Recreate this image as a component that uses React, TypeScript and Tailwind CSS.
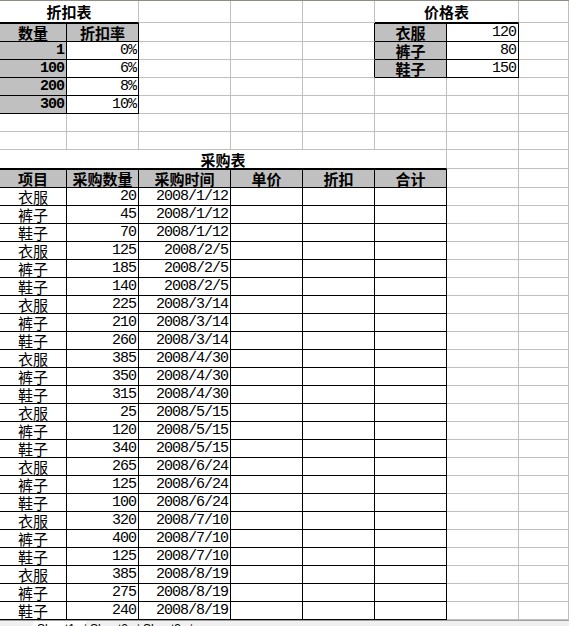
import type { ReactNode } from "react";

const CN = "font-['Noto_Sans_CJK_SC',sans-serif]";
const NUM = "font-['Liberation_Mono',monospace] tracking-[-1px]";

type Edge = "g" | "k";

interface CellProps {
  w: string;
  rb?: Edge;
  bb?: Edge;
  head?: boolean;
  top?: boolean;
  align?: "l" | "c" | "r";
  className?: string;
  children?: ReactNode;
}

function Cell({
  w,
  rb = "g",
  bb = "g",
  head = false,
  top = false,
  align = "c",
  className = "",
  children,
}: CellProps) {
  const r = rb === "k" ? "border-r-black" : "border-r-[#c0c0c0]";
  const b = bb === "k" ? "border-b-black" : "border-b-[#c0c0c0]";
  const j =
    align === "r" ? "justify-end pr-[2px]" : align === "l" ? "justify-start pl-[2px]" : "justify-center";
  return (
    <div
      className={`flex h-full shrink-0 items-center whitespace-nowrap border-r border-b leading-[15px] ${w} ${r} ${b} ${j} ${
        head ? "bg-[#c0c0c0] font-bold" : ""
      } ${top ? "shadow-[inset_0_1px_0_#000]" : ""} ${className}`}
    >
      {children}
    </div>
  );
}

const discounts = [
  ["1", "0%"],
  ["100", "6%"],
  ["200", "8%"],
  ["300", "10%"],
];

const prices = [
  ["衣服", "120"],
  ["裤子", "80"],
  ["鞋子", "150"],
];

const purchases: [string, number, string][] = [
  ["衣服", 20, "2008/1/12"],
  ["裤子", 45, "2008/1/12"],
  ["鞋子", 70, "2008/1/12"],
  ["衣服", 125, "2008/2/5"],
  ["裤子", 185, "2008/2/5"],
  ["鞋子", 140, "2008/2/5"],
  ["衣服", 225, "2008/3/14"],
  ["裤子", 210, "2008/3/14"],
  ["鞋子", 260, "2008/3/14"],
  ["衣服", 385, "2008/4/30"],
  ["裤子", 350, "2008/4/30"],
  ["鞋子", 315, "2008/4/30"],
  ["衣服", 25, "2008/5/15"],
  ["裤子", 120, "2008/5/15"],
  ["鞋子", 340, "2008/5/15"],
  ["衣服", 265, "2008/6/24"],
  ["裤子", 125, "2008/6/24"],
  ["鞋子", 100, "2008/6/24"],
  ["衣服", 320, "2008/7/10"],
  ["裤子", 400, "2008/7/10"],
  ["鞋子", 125, "2008/7/10"],
  ["衣服", 385, "2008/8/19"],
  ["裤子", 275, "2008/8/19"],
  ["鞋子", 240, "2008/8/19"],
];

export default function App() {
  return (
    <div className={`h-[626px] w-[569px] overflow-hidden bg-white text-[15px] text-black ${CN}`}>
      <div className="h-px bg-[#8c8c84]" />

      {/* row 1: titles */}
      <div className="flex h-[22px]">
        <Cell w="w-[139px]" bb="k" className="font-bold">
          折扣表
        </Cell>
        <Cell w="w-[92px]" />
        <Cell w="w-[72px]" />
        <Cell w="w-[72px]" />
        <Cell w="w-[144px]" bb="k" className="font-bold">
          价格表
        </Cell>
        <Cell w="flex-1" />
      </div>

      {/* row 2: discount header + first price */}
      <div className="flex h-[19px]">
        <Cell w="w-[67px]" rb="k" bb="k" head top>
          数量
        </Cell>
        <Cell w="w-[72px]" rb="k" bb="k" head top>
          折扣率
        </Cell>
        <Cell w="w-[92px]" />
        <Cell w="w-[72px]" />
        <Cell w="w-[72px]" rb="k" />
        <Cell w="w-[72px]" rb="k" bb="k" head top>
          {prices[0][0]}
        </Cell>
        <Cell w="w-[72px]" rb="k" bb="k" align="r" top className={NUM}>
          {prices[0][1]}
        </Cell>
        <Cell w="flex-1" />
      </div>

      {discounts.map(([qty, rate], i) => {
        const price = prices[i + 1];
        return (
          <div key={qty} className="flex h-[18px]">
            <Cell w="w-[67px]" rb="k" bb="k" head align="r" className={NUM}>
              {qty}
            </Cell>
            <Cell w="w-[72px]" rb="k" bb="k" align="r" className={NUM}>
              {rate}
            </Cell>
            <Cell w="w-[92px]" />
            <Cell w="w-[72px]" />
            <Cell w="w-[72px]" rb={price ? "k" : "g"} />
            {price ? (
              <>
                <Cell w="w-[72px]" rb="k" bb="k" head>
                  {price[0]}
                </Cell>
                <Cell w="w-[72px]" rb="k" bb="k" align="r" className={NUM}>
                  {price[1]}
                </Cell>
              </>
            ) : (
              <>
                <Cell w="w-[72px]" />
                <Cell w="w-[72px]" />
              </>
            )}
            <Cell w="flex-1" />
          </div>
        );
      })}

      {[0, 1].map((k) => (
        <div key={k} className="flex h-[18px]">
          <Cell w="w-[67px]" />
          <Cell w="w-[72px]" />
          <Cell w="w-[92px]" />
          <Cell w="w-[72px]" />
          <Cell w="w-[72px]" />
          <Cell w="w-[72px]" />
          <Cell w="w-[72px]" />
          <Cell w="flex-1" />
        </div>
      ))}

      {/* purchase title */}
      <div className="flex h-[19px]">
        <Cell w="w-[447px]" bb="k" className="font-bold">
          采购表
        </Cell>
        <Cell w="w-[72px]" />
        <Cell w="flex-1" />
      </div>

      {/* purchase header */}
      <div className="flex h-[19px]">
        <Cell w="w-[67px]" rb="k" bb="k" head top>
          项目
        </Cell>
        <Cell w="w-[72px]" rb="k" bb="k" head top>
          采购数量
        </Cell>
        <Cell w="w-[92px]" rb="k" bb="k" head top>
          采购时间
        </Cell>
        <Cell w="w-[72px]" rb="k" bb="k" head top>
          单价
        </Cell>
        <Cell w="w-[72px]" rb="k" bb="k" head top>
          折扣
        </Cell>
        <Cell w="w-[72px]" rb="k" bb="k" head top>
          合计
        </Cell>
        <Cell w="w-[72px]" />
        <Cell w="flex-1" />
      </div>

      {purchases.map(([item, qty, date], i) => (
        <div key={i} className="flex h-[18px]">
          <Cell w="w-[67px]" rb="k" bb="k">
            {item}
          </Cell>
          <Cell w="w-[72px]" rb="k" bb="k" align="r" className={NUM}>
            {qty}
          </Cell>
          <Cell w="w-[92px]" rb="k" bb="k" align="r" className={NUM}>
            {date}
          </Cell>
          <Cell w="w-[72px]" rb="k" bb="k" />
          <Cell w="w-[72px]" rb="k" bb="k" />
          <Cell w="w-[72px]" rb="k" bb="k" />
          <Cell w="w-[72px]" />
          <Cell w="flex-1" />
        </div>
      ))}

      {/* sheet tabs */}
      <div className="flex h-[20px] items-start border-t border-[#a0a0a0] bg-[#f0f0f0] font-['Liberation_Sans',sans-serif] text-[12px] leading-[14px]">
        <div className="flex w-[33px] shrink-0 gap-[3px] pl-[2px] pt-[1px] text-[10px]">
          <span>◄</span>
          <span>►</span>
        </div>
        {["Sheet1", "Sheet2", "Sheet3"].map((s, i) => (
          <div
            key={s}
            className={`flex w-[53px] shrink-0 justify-between pl-[4px] pt-[1px] ${i === 0 ? "bg-white" : ""}`}
          >
            <span>{s}</span>
            <span className="text-[#404040]">/</span>
          </div>
        ))}
      </div>
    </div>
  );
}
